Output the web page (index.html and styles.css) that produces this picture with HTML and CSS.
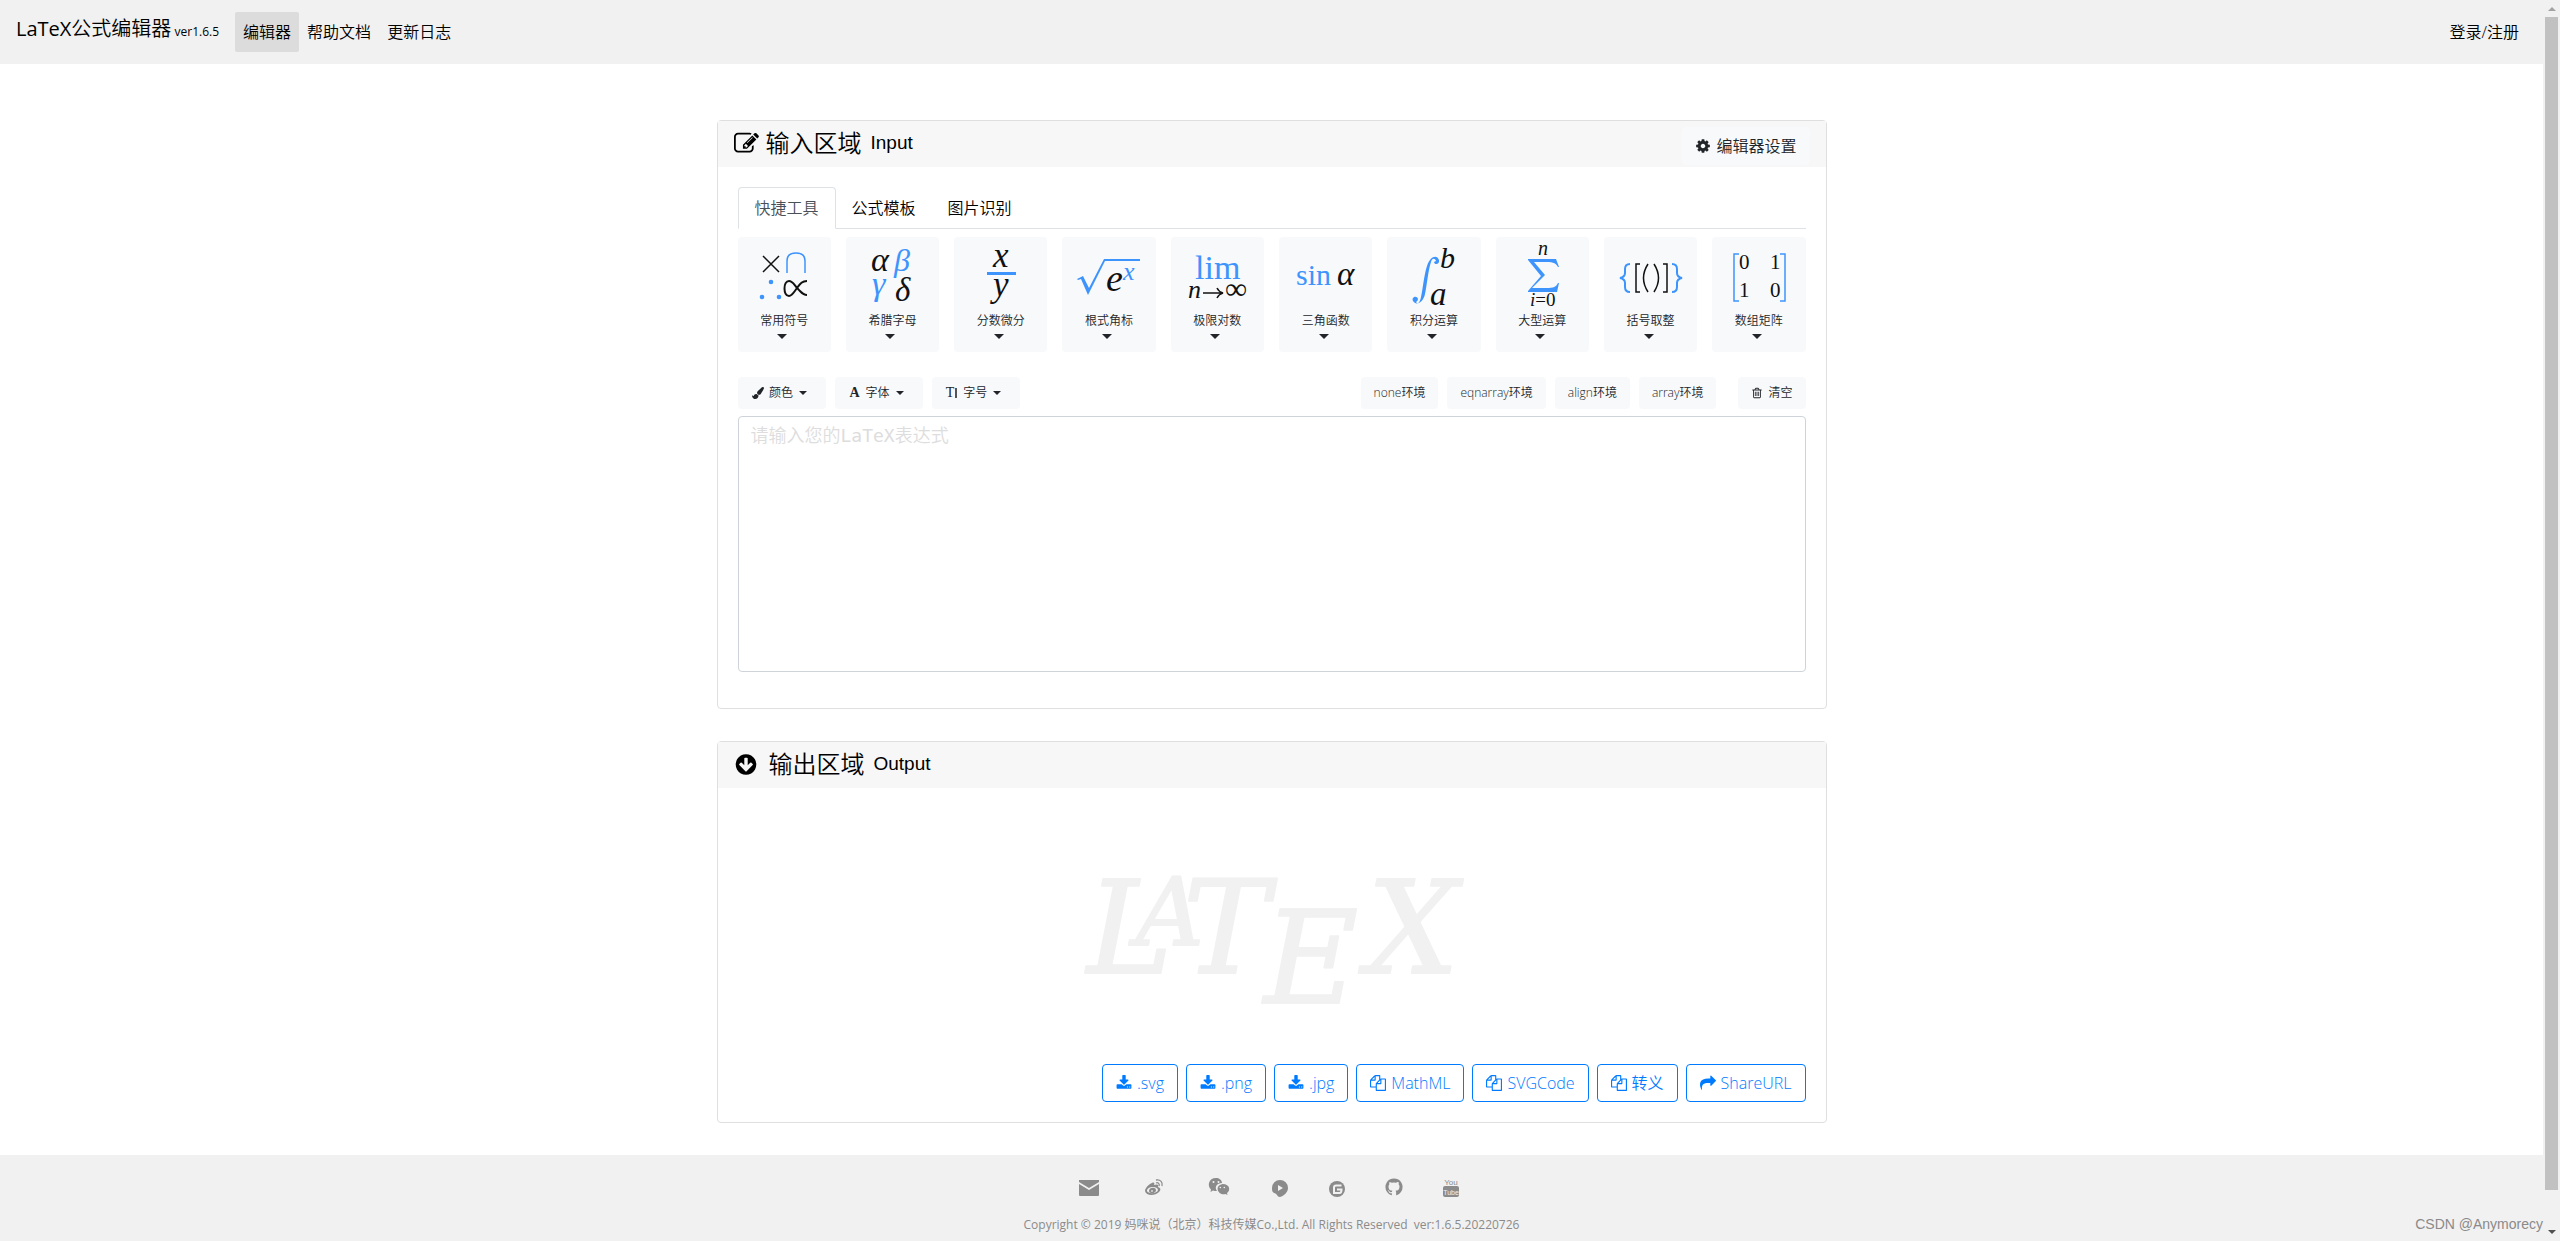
FILE: index.html
```html
<!DOCTYPE html>
<html lang="zh-CN">
<head>
<meta charset="utf-8">
<title>LaTeX公式编辑器</title>
<link rel="stylesheet" href="styles.css">
</head>
<body>
<svg class="defs" aria-hidden="true">
  <symbol id="edit" viewBox="0 0 1792 1792"><path d="M888 1184l116-116-152-152-116 116v56h96v96h56zm440-720q-16-16-33 1l-350 350q-17 17-1 33t33-1l350-350q17-17 1-33zm80 594v190q0 119-84.5 203.5t-203.5 84.5h-832q-119 0-203.5-84.5t-84.5-203.5v-832q0-119 84.5-203.5t203.5-84.5h832q63 0 117 25 15 7 18 23 3 17-9 29l-49 49q-14 14-32 8-23-6-45-6h-832q-66 0-113 47t-47 113v832q0 66 47 113t113 47h832q66 0 113-47t47-113v-126q0-13 9-22l64-64q15-15 35-7t20 29zm-96-738l288 288-672 672h-288v-288zm444 132l-92 92-288-288 92-92q28-28 68-28t68 28l152 152q28 28 28 68t-28 68z"/></symbol>
  <symbol id="cog" viewBox="0 0 1792 1792"><path d="M1152 896q0-106-75-181t-181-75-181 75-75 181 75 181 181 75 181-75 75-181zm512-109v222q0 12-8 23t-20 13l-185 28q-19 54-39 91 35 50 107 138 10 12 10 25t-9 23q-27 37-99 108t-94 71q-12 0-26-9l-138-108q-44 23-91 38-16 136-29 186-7 28-36 28h-222q-14 0-24.5-8.5t-11.5-21.5l-28-184q-49-16-90-37l-141 107q-10 9-25 9-14 0-25-11-126-114-165-168-7-10-7-23 0-12 8-23 15-21 51-66.5t54-70.5q-27-50-41-99l-183-27q-13-2-21-12.5t-8-23.5v-222q0-12 8-23t19-13l186-28q14-46 39-92-40-57-107-138-10-12-10-24 0-10 9-23 26-36 98.5-107.5t94.5-71.5q13 0 26 10l138 107q44-23 91-38 16-136 29-186 7-28 36-28h222q14 0 24.5 8.5t11.5 21.5l28 184q49 16 90 37l142-107q9-9 24-9 13 0 25 10 129 119 165 170 7 8 7 22 0 12-8 23-15 21-51 66.5t-54 70.5q26 50 41 98l183 28q13 2 21 12.5t8 23.5z"/></symbol>
  <symbol id="down" viewBox="0 0 1792 1792"><path d="M1412 897q0-27-18-45l-91-91q-18-18-45-18t-45 18l-189 189v-502q0-26-19-45t-45-19h-128q-26 0-45 19t-19 45v502l-189-189q-19-19-45-19t-45 19l-91 91q-18 18-18 45t18 45l362 362 91 91q18 18 45 18t45-18l91-91 362-362q18-18 18-45zm252-1q0 209-103 385.5t-279.5 279.5-385.5 103-385.5-103-279.5-279.5-103-385.5 103-385.5 279.5-279.5 385.5-103 385.5 103 279.5 279.5 103 385.5z"/></symbol>
  <symbol id="download" viewBox="0 0 1792 1792"><path d="M1344 1344q0-26-19-45t-45-19-45 19-19 45 19 45 45 19 45-19 19-45zm256 0q0-26-19-45t-45-19-45 19-19 45 19 45 45 19 45-19 19-45zm128-224v320q0 40-28 68t-68 28h-1472q-40 0-68-28t-28-68v-320q0-40 28-68t68-28h465l135 136q58 56 136 56t136-56l136-136h464q40 0 68 28t28 68zm-325-569q17 41-14 70l-448 448q-18 19-45 19t-45-19l-448-448q-31-29-14-70 17-39 59-39h256v-448q0-26 19-45t45-19h256q26 0 45 19t19 45v448h256q42 0 59 39z"/></symbol>
  <symbol id="copy" viewBox="0 0 1792 1792"><path d="M1696 384q40 0 68 28t28 68v1216q0 40-28 68t-68 28h-960q-40 0-68-28t-28-68v-288h-544q-40 0-68-28t-28-68v-672q0-40 20-88t48-76l408-408q28-28 76-48t88-20h416q40 0 68 28t28 68v328q68-40 128-40h416zm-544 213l-299 299h299v-299zm-640-384l-299 299h299v-299zm196 647l316-316v-416h-384v416q0 40-28 68t-68 28h-416v640h512v-256q0-40 20-88t48-76zm956 804v-1152h-384v416q0 40-28 68t-68 28h-416v640h896z"/></symbol>
  <symbol id="share" viewBox="0 0 1792 1792"><path d="M1792 640q0 26-19 45l-512 512q-19 19-45 19t-45-19-19-45v-256h-224q-98 0-175.5 6t-154 21.5-133 42.5-105.5 69.5-80 101-48.5 138.5-17.5 181q0 55 5 123 0 6 2.5 23.5t2.5 26.5q0 15-8.5 25t-23.5 10q-16 0-28-17-7-9-13-22t-13.5-30-10.5-24q-127-285-127-451 0-199 53-333 162-403 875-403h224v-256q0-26 19-45t45-19 45 19l512 512q19 19 19 45z"/></symbol>
  <symbol id="brush" viewBox="0 0 1792 1792"><path d="M1615 0q70 0 122.5 46.5t52.5 116.5q0 63-45 151-332 629-465 752-97 91-218 91-126 0-216.5-92.5t-90.5-219.5q0-128 92-212l638-579q59-54 130-54zm-909 1034q39 76 106.5 130t150.5 76l1 71q4 213-129.5 347t-348.5 134q-123 0-218-46.5t-152.5-127.5-86.5-183-29-220q7 5 41 30t62 44.5 59 36.5 46 17q41 0 55-37 25-66 57.5-112.5t69.5-76 88-47.5 103-25.5 125-10.5z"/></symbol>
  <symbol id="trash" viewBox="0 0 1792 1792"><path d="M704 736v576q0 14-9 23t-23 9h-64q-14 0-23-9t-9-23v-576q0-14 9-23t23-9h64q14 0 23 9t9 23zm256 0v576q0 14-9 23t-23 9h-64q-14 0-23-9t-9-23v-576q0-14 9-23t23-9h64q14 0 23 9t9 23zm256 0v576q0 14-9 23t-23 9h-64q-14 0-23-9t-9-23v-576q0-14 9-23t23-9h64q14 0 23 9t9 23zm128 724v-948h-896v948q0 22 7 40.5t14.5 27 10.5 8.5h832q3 0 10.5-8.5t14.5-27 7-40.5zm-672-1076h448l-48-117q-7-9-17-11h-317q-10 2-17 11zm928 32v64q0 14-9 23t-23 9h-96v948q0 83-47 143.5t-113 60.5h-832q-66 0-113-58.5t-47-141.5v-952h-96q-14 0-23-9t-9-23v-64q0-14 9-23t23-9h309l70-167q15-37 54-63t79-26h320q40 0 79 26t54 63l70 167h309q14 0 23 9t9 23z"/></symbol>
  <symbol id="github" viewBox="0 0 1792 1792"><path d="M896 128q209 0 385.5 103t279.5 279.5 103 385.5q0 251-146.5 451.5t-378.5 277.5q-27 5-40-7t-13-30q0-3 .5-76.5t.5-134.5q0-97-52-142 57-6 102.5-18t94-39 81-66.5 53-105 20.5-150.5q0-119-79-206 37-91-8-204-28-9-81 11t-92 44l-38 24q-93-26-192-26t-192 26q-16-11-42.5-27t-83.5-38.5-85-13.5q-45 113-8 204-79 87-79 206 0 85 20.5 150t52.5 105 80.5 67 94 39 102.5 18q-39 36-49 103-21 10-45 15t-57 5-65.5-21.5-55.5-62.5q-19-32-48.5-52t-49.5-24l-20-3q-21 0-29 4.5t-5 11.5 9 14 13 12l7 5q22 10 43.5 38t31.5 51l10 23q13 38 44 61.5t67 30 69.5 7 55.5-3.5l23-4q0 38 .5 88.5t.5 54.5q0 18-13 30t-40 7q-232-77-378.5-277.5t-146.5-451.5q0-209 103-385.5t279.5-279.5 385.5-103z"/></symbol>
</svg>

<div class="window">
<div class="page">
  <header class="topbar">
    <a class="brand" href="#"><b>LaTeX</b>公式编辑器 <small>ver1.6.5</small></a>
    <nav class="nav">
      <a class="active" href="#">编辑器</a>
      <a href="#">帮助文档</a>
      <a href="#">更新日志</a>
    </nav>
    <a class="login" href="#">登录/注册</a>
  </header>

  <main class="container">
    <section class="card">
      <div class="card-head">
        <h2><svg class="ico-title"><use href="#edit"/></svg>输入区域 <span>Input</span></h2>
        <button class="settings" type="button"><svg class="ico"><use href="#cog"/></svg>编辑器设置</button>
      </div>
      <div class="card-body input-body">
        <div class="tabs" role="tablist">
          <button class="tab on" type="button" role="tab" aria-selected="true">快捷工具</button>
          <button class="tab" type="button" role="tab">公式模板</button>
          <button class="tab" type="button" role="tab">图片识别</button>
        </div>
        <div class="tools">
          <button class="tool" type="button"><svg class="formula" viewBox="0 0 92 74"><g class="line"><path d="M25 19l16 16M41 19l-16 16"/><path class="blue" d="M49 36V24q0-8 9-8t9 8v12"/><path class="bold" d="M69 44c-5 0-7 3-10 7s-5 8-8 8c-6 0-6-15 0-15 4 0 5 4 9 8s5 6 9 6"/></g><g class="bfill"><circle cx="33" cy="45" r="2.300"/><circle cx="24" cy="60" r="2.300"/><circle cx="41" cy="60" r="2.300"/></g></svg><span>常用符号</span><i class="caret"></i></button>
          <button class="tool" type="button"><svg class="formula" viewBox="0 0 92 74"><text x="25" y="34" font-size="34">α</text><text class="bfill" x="48" y="34" font-size="32">β</text><text class="bfill" x="26" y="58" font-size="34">γ</text><text x="49" y="64" font-size="33">δ</text></svg><span>希腊字母</span><i class="caret"></i></button>
          <button class="tool" type="button"><svg class="formula" viewBox="0 0 92 74"><text x="38" y="30" font-size="35">x</text><rect class="bfill" x="32" y="35" width="29" height="3"/><text x="38" y="59" font-size="35">y</text></svg><span>分数微分</span><i class="caret"></i></button>
          <button class="tool" type="button"><svg class="formula" viewBox="0 0 92 74"><path class="bfill" d="M14 42l6-3 6 12L41 22h36v2H42L25 58l-7-16-3 1z"/><text x="43" y="54" font-size="38">e</text><text class="bfill" x="60" y="43" font-size="26">x</text></svg><span>根式角标</span><i class="caret"></i></button>
          <button class="tool" type="button"><svg class="formula" viewBox="0 0 92 74"><text class="up bfill" x="24" y="42" font-size="34">lim</text><text x="17" y="61" font-size="26">n</text><path class="line" d="M32 56h19M46 51q2 4 6 5q-4 1-6 5"/><text class="up" x="54" y="62" font-size="31">∞</text></svg><span>极限对数</span><i class="caret"></i></button>
          <button class="tool" type="button"><svg class="formula" viewBox="0 0 92 74"><text class="up bfill" x="16" y="48" font-size="30">sin</text><text x="57" y="48" font-size="33">α</text></svg><span>三角函数</span><i class="caret"></i></button>
          <button class="tool" type="button"><svg class="formula" viewBox="0 0 92 74"><path class="bfill" d="M48 24c-1-3-4-3-5 1-3 9-4 23-6 32-2 9-9 12-12 7-2-4 4-6 5-2 0 2-2 3-2 3 2 3 4 0 5-5 2-9 3-22 6-31 3-10 10-12 12-6 1 5-5 5-5 2z"/><text x="52" y="31" font-size="30">b</text><text x="42" y="68" font-size="33">a</text></svg><span>积分运算</span><i class="caret"></i></button>
          <button class="tool" type="button"><svg class="formula" viewBox="0 0 92 74"><text x="42" y="18" font-size="20">n</text><path class="bfill" d="M32 22h28l3 8h-1c-3-5-6-5-14-5H38l11 13-13 13h14c8 0 10-1 12-5h1l-2 9H32v-1l13-15-13-16z"/><text x="34" y="69" font-size="19">i<tspan font-style="normal">=0</tspan></text></svg><span>大型运算</span><i class="caret"></i></button>
          <button class="tool" type="button"><svg class="formula" viewBox="0 0 92 74"><g class="line"><path class="blue bold" d="M25 27q-5 0-5 5v4q0 4-5 5q5 1 5 5v4q0 5 5 5M67 27q5 0 5 5v4q0 4 5 5q-5 1-5 5v4q0 5-5 5"/><path d="M35 27h-4v28h4M58 27h4v28h-4M43 27q-9 14 0 28M49 27q9 14 0 28"/></g></svg><span>括号取整</span><i class="caret"></i></button>
          <button class="tool" type="button"><svg class="formula" viewBox="0 0 92 74"><path class="line blue" d="M26 17h-5v47h5M67 17h5v47h-5"/><g class="up"><text x="26" y="32" font-size="21">0</text><text x="57" y="32" font-size="21">1</text><text x="26" y="60" font-size="21">1</text><text x="57" y="60" font-size="21">0</text></g></svg><span>数组矩阵</span><i class="caret"></i></button>
        </div>
        <div class="bar">
          <div class="group">
            <button class="small style" type="button"><svg class="ico-s"><use href="#brush"/></svg>颜色<i class="caret"></i></button>
            <button class="small style" type="button"><b class="glyph">A</b>字体<i class="caret"></i></button>
            <button class="small style" type="button"><span class="glyph">T<i class="rule"></i></span>字号<i class="caret"></i></button>
          </div>
          <div class="group">
            <button class="small" type="button">none环境</button>
            <button class="small" type="button">eqnarray环境</button>
            <button class="small" type="button">align环境</button>
            <button class="small" type="button">array环境</button>
            <button class="small clear" type="button"><svg class="ico-s"><use href="#trash"/></svg>清空</button>
          </div>
        </div>
        <textarea class="source" aria-label="LaTeX表达式" placeholder="请输入您的LaTeX表达式"></textarea>
      </div>
    </section>

    <section class="card">
      <div class="card-head">
        <h2><svg class="ico-title wide"><use href="#down"/></svg>输出区域 <span>Output</span></h2>
      </div>
      <div class="card-body output-body">
        <svg class="logo" viewBox="0 0 384 140" role="img" aria-label="LaTeX"><text x="7" y="103" font-size="129">L</text><text x="56" y="75" font-size="94">A</text><text x="103" y="103" font-size="129">T</text><text x="184" y="133" font-size="129">E</text><text x="287" y="103" font-size="129">X</text></svg>
        <div class="exports">
          <button type="button"><svg class="ico"><use href="#download"/></svg>.svg</button>
          <button type="button"><svg class="ico"><use href="#download"/></svg>.png</button>
          <button type="button"><svg class="ico"><use href="#download"/></svg>.jpg</button>
          <button type="button"><svg class="ico"><use href="#copy"/></svg>MathML</button>
          <button type="button"><svg class="ico"><use href="#copy"/></svg>SVGCode</button>
          <button type="button"><svg class="ico"><use href="#copy"/></svg>转义</button>
          <button type="button"><svg class="ico"><use href="#share"/></svg>ShareURL</button>
        </div>
      </div>
    </section>
  </main>

  <footer class="footer">
    <div class="social">
      <a class="broad" href="#" aria-label="邮箱"><svg viewBox="0 0 20 20"><path d="M0 3h20v2l-10 6L0 5zM0 7l10 6 10-6v11q0 1-1 1H1q-1 0-1-1z"/></svg></a>
      <a class="broad" href="#" aria-label="微博"><svg viewBox="0 0 20 20"><path fill-rule="evenodd" d="M8 6c2-1 3 0 2 2 3-1 5-1 4 2 3 1 3 3 1 5-4 4-13 4-14-1 0-3 4-7 7-8zM3 14c1 3 10 3 11-1 0-4-11-4-11 1z"/><path fill-rule="evenodd" d="M5 14c0-4 7-4 7-1 0 4-7 4-7 1zm2 0c0 1 2 1 2 0s-2-1-2 0z"/><path class="arc" d="M12 3c4-1 7 2 6 6M12 6c2-1 4 1 3 3"/></svg></a>
      <a class="broad" href="#" aria-label="微信"><svg viewBox="0 0 20 20"><path fill-rule="evenodd" d="M13 6c-5 0-8 4-5 8-1 0-3 0-4-.5L1.500 15l.5-2.500C-2 9-.5 1 7 1c3 0 6 2 6 5zM3.500 5a1 1 0 0 0 2 0 1 1 0 0 0-2 0zm5 0a1 1 0 0 0 2 0 1 1 0 0 0-2 0z"/><path fill-rule="evenodd" d="M13.500 7c8 0 8 7 4.500 9l.5 2-2-1c-7 2-12-8-3-10zm-3 3.500a.8.8 0 0 0 1.600 0 .8.8 0 0 0-1.600 0zm4 0a.8.8 0 0 0 1.600 0 .8.8 0 0 0-1.600 0z"/></svg></a>
      <a href="#" aria-label="视频"><svg viewBox="0 0 20 20"><path fill-rule="evenodd" d="M2 11a8 8 0 0 1 16 0c0 4-4 8-8 9-3 0-3-4-6-4-2-1-2-3-2-5zm6-3v6l5-3z"/></svg></a>
      <a href="#" aria-label="码云"><svg viewBox="0 0 20 20"><circle cx="10" cy="12" r="8"/><path class="cut" d="M14.500 8.500H9q-2 0-2 2V16h5.500q2 0 2-3.500H10"/></svg></a>
      <a href="#" aria-label="GitHub"><svg viewBox="0 0 1792 1792"><use href="#github"/></svg></a>
      <a href="#" aria-label="YouTube"><svg viewBox="0 0 20 20"><text x="10" y="8" font-size="8" text-anchor="middle">You</text><rect x="2" y="9" width="16" height="11" rx="2"/><text class="inv" x="10" y="18" font-size="7" text-anchor="middle">Tube</text></svg></a>
    </div>
    <p>Copyright © 2019 妈咪说（北京）科技传媒Co.,Ltd. All Rights Reserved&nbsp; ver:1.6.5.20220726</p>
    <div class="watermark">CSDN @Anymorecy</div>
  </footer>
</div>
<div class="scrollbar" aria-hidden="true"><i class="up-arrow"></i><div class="thumb"></div><i class="down-arrow"></i></div>
</div>
</body>
</html>
```
FILE: styles.css
```css
* { box-sizing: border-box; }
html, body { height: 100%; }
body { margin: 0; background: #fff; color: #212529; font: 350 16px/24px "Open Sans", "Noto Sans CJK SC", sans-serif; }
a { color: #000; text-decoration: none; }
button { font: inherit; color: inherit; border: 0; cursor: pointer; white-space: nowrap; }
svg { fill: currentColor; overflow: visible; }
.defs { position: absolute; width: 0; height: 0; }

.window { display: flex; min-height: 100%; }
.page { flex: 1; display: flex; flex-direction: column; }

.topbar { display: flex; align-items: center; height: 64px; padding: 0 16px; background: #f1f1f1; }
.brand { margin-right: 16px; padding-bottom: 4px; font-size: 20px; line-height: 30px; }
.brand b { font-weight: 400; }
.brand small { margin-left: -2px; font-size: 12px; font-weight: 400; }
.nav { display: flex; flex: 1; }
.nav a, .login { padding: 8px; }
.nav .active { background: #dcdcdc; border-radius: 2px; }

.container { width: 1110px; max-width: 100%; margin: 56px auto 0; display: flex; flex-direction: column; gap: 32px; }
.card { border: 1px solid #dfdfdf; border-radius: 4px; background: #fff; }
.card-head { display: flex; justify-content: space-between; height: 46px; padding: 0 16px; background: #f7f7f7; color: #000; }
.card-head h2 { display: flex; align-items: center; gap: 7px; margin: 0; font-size: 24px; line-height: 42px; font-weight: 350; padding-bottom: 2px; }
.card-head h2 span { font: 19px/46px "Liberation Sans", sans-serif; margin-left: 2px; }
.ico-title { width: 25px; height: 25px; }
.ico-title.wide { width: 24px; margin-right: 4px; }
.settings { display: flex; align-items: center; height: 38px; margin-top: 6px; padding: 0 13px; background: #f8f9fa; border-radius: 4px; color: #212529; }
.ico { width: 16px; height: 16px; margin-right: 5px; flex: none; }

.card-body { padding: 20px; }
.tabs { display: flex; border-bottom: 1px solid #dee2e6; }
.tab { height: 42px; margin-bottom: -1px; padding: 0 15px; border: 1px solid transparent; border-radius: 4px 4px 0 0; background: none; color: #000; }
.tab.on { border-color: #dee2e6 #dee2e6 #fff; background: #fff; color: #495057; padding: 0 16px; }
.tools { display: grid; grid-template-columns: repeat(10, 1fr); gap: 15px; margin-top: 8px; }
.tool { display: flex; flex-direction: column; align-items: center; height: 115px; padding: 0; background: #f8f9fa; border-radius: 4px; font-size: 12px; line-height: 18px; }
.tool span { margin-top: 1px; }
.formula { width: 92px; height: 74px; font-family: "Liberation Serif", serif; font-style: italic; font-weight: 400; fill: #111; }
.formula .up { font-style: normal; }
.formula .bfill { fill: #3e94fd; }
.line { fill: none; stroke: #111; stroke-width: 1.5; }
.blue, .line .blue { stroke: #3e94fd; }
.line .bold { stroke-width: 2; }
.caret { width: 0; height: 0; border: 4px solid transparent; border-top-color: #212529; border-bottom: 0; }
.tool .caret { border-width: 5px 5px 0; margin: 4px 4px 0 0; }

.bar { display: flex; justify-content: space-between; margin: 25px 0 7px; }
.group { display: flex; gap: 9px; }
.small { display: flex; align-items: center; justify-content: center; height: 32px; padding: 0 13px; background: #f8f9fa; border-radius: 4px; font-size: 12px; }
.style { width: 88px; padding: 0 4px 0 0; }
.style .caret { margin-left: 6px; }
.clear { margin-left: 13px; }
.ico-s { width: 12px; height: 12px; margin-right: 5px; }
.glyph { display: flex; gap: 1px; margin-right: 6px; font: 14px/16px "Liberation Serif", serif; }
b.glyph { font-weight: 700; }
.rule { width: 2px; height: 10px; margin-top: 3px; background: #555; }
.source { display: block; width: 100%; height: 256px; padding: 5px 12px; border: 1px solid #ced4da; border-radius: 4px; resize: none; background: #fff; font: 350 18px/27px "DejaVu Sans Mono", "Noto Sans CJK SC", monospace; }
.source::placeholder { color: #ddd; }
.input-body { padding-bottom: 36px; }

.output-body { display: flex; flex-direction: column; align-items: center; padding-top: 82px; }
.logo { width: 384px; height: 140px; fill: #f1f1f1; stroke: #f1f1f1; stroke-width: 2; stroke-linejoin: round; font-family: "DejaVu Serif", serif; font-style: italic; font-weight: 400; }
.exports { display: flex; gap: 8px; align-self: flex-end; margin-top: 54px; }
.exports button { display: flex; align-items: center; height: 38px; padding: 0 13px; border: 1px solid #007bff; border-radius: 4px; background: #fff; color: #007bff; }

.footer { position: relative; flex: 1; margin-top: 32px; padding-top: 22px; background: #f1f1f1; color: #8b8b8b; text-align: center; }
.social { display: flex; justify-content: center; height: 20px; gap: 37px; padding-right: 8px; }
.social a { color: #8b8b8b; }
.social .broad { padding: 0 4px; }
.social svg { display: block; width: 20px; height: 20px; }
.social text { font-family: "Liberation Sans Narrow", "Liberation Sans", sans-serif; }
.social .inv { fill: #f1f1f1; }
.arc { fill: none; stroke: currentColor; stroke-width: 1.3; }
.cut { fill: none; stroke: #f1f1f1; stroke-width: 2; }
.footer p { margin: 16px 0 0; font-size: 12px; font-weight: 400; line-height: 24px; }
.watermark { position: absolute; right: 0; bottom: 5px; font: 14px/24px "Liberation Sans", sans-serif; color: #8a8a8a; }

.scrollbar { display: flex; flex-direction: column; align-items: center; width: 17px; background: #f1f1f1; }
.thumb { flex: 1; width: 13px; margin-bottom: 40px; background: #c1c1c1; }
.up-arrow { margin: 7px 0 6px; border: 4px solid transparent; border-top: 0; border-bottom-color: #a3a3a3; }
.down-arrow { margin-bottom: 7px; border: 4px solid transparent; border-bottom: 0; border-top-color: #505050; }
```
